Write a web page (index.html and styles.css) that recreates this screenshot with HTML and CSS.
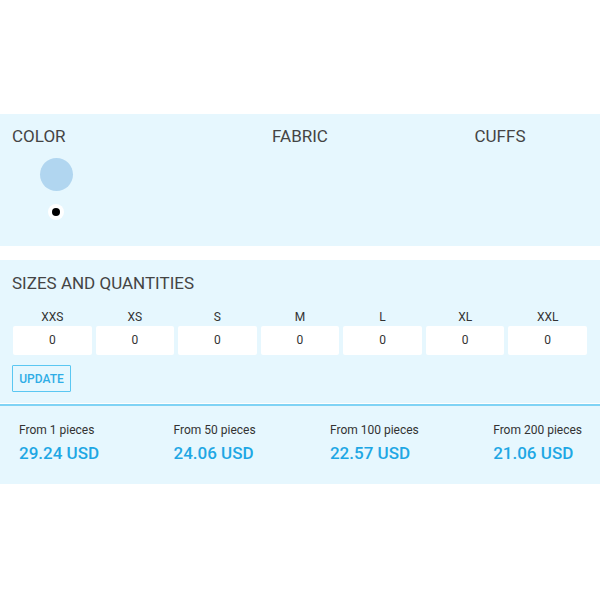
FILE: index.html
```html
<!DOCTYPE html>
<html lang="en">
<head>
  <meta charset="UTF-8">
  <meta name="viewport" content="width=device-width, initial-scale=1.0">
  <title>Product options</title>
  <link rel="stylesheet" href="styles.css">
</head>
<body>
  <div class="page">
    <div class="options">
      <div class="option option-color">
        <div class="option-title">COLOR</div>
        <div class="swatches">
          <div class="swatch"></div>
          <div class="swatch-dot"><span></span></div>
        </div>
      </div>
      <div class="option option-center">
        <div class="option-title">FABRIC</div>
      </div>
      <div class="option option-center">
        <div class="option-title">CUFFS</div>
      </div>
    </div>

    <div class="sizes">
      <div class="section-title">SIZES AND QUANTITIES</div>
      <div class="size-grid">
        <div class="size"><div class="size-label">XXS</div><div class="size-input">0</div></div>
        <div class="size"><div class="size-label">XS</div><div class="size-input">0</div></div>
        <div class="size"><div class="size-label">S</div><div class="size-input">0</div></div>
        <div class="size"><div class="size-label">M</div><div class="size-input">0</div></div>
        <div class="size"><div class="size-label">L</div><div class="size-input">0</div></div>
        <div class="size"><div class="size-label">XL</div><div class="size-input">0</div></div>
        <div class="size"><div class="size-label">XXL</div><div class="size-input">0</div></div>
      </div>
      <button class="update-btn">UPDATE</button>
    </div>

    <div class="prices">
      <div class="price">
        <div class="price-from">From 1 pieces</div>
        <div class="price-value">29.24 USD</div>
      </div>
      <div class="price">
        <div class="price-from">From 50 pieces</div>
        <div class="price-value">24.06 USD</div>
      </div>
      <div class="price">
        <div class="price-from">From 100 pieces</div>
        <div class="price-value">22.57 USD</div>
      </div>
      <div class="price">
        <div class="price-from">From 200 pieces</div>
        <div class="price-value">21.06 USD</div>
      </div>
    </div>
  </div>
</body>
</html>
```

FILE: styles.css
```css
body, html {
  margin: 0;
  padding: 0;
  background-color: #ffffff;
  font-family: 'Roboto', 'Liberation Sans', sans-serif;
  color: #444444;
}

.page {
  padding-top: 114px;
}

/* colour / fabric / cuffs */
.options {
  display: grid;
  grid-template-columns: 1fr 1fr 1fr;
  background-color: #e6f7fe;
  height: 132px;
}

.option {
  padding-top: 12px;
}

.option-color {
  padding-left: 12px;
}

.option-center {
  text-align: center;
}

.option-title {
  font-size: 17px;
  line-height: 20px;
  color: #444444;
}

.swatches {
  display: flex;
  flex-direction: column;
  align-items: center;
  width: 88px;
  gap: 13px;
  margin-top: 12px;
}

.swatch {
  width: 33px;
  height: 33px;
  border-radius: 50%;
  background-color: #b1d6f0;
}

.swatch-dot {
  width: 16px;
  height: 16px;
  border-radius: 50%;
  background-color: #ffffff;
  display: flex;
  align-items: center;
  justify-content: center;
}

.swatch-dot span {
  width: 8px;
  height: 8px;
  border-radius: 50%;
  background-color: #000000;
}

/* sizes */
.sizes {
  margin-top: 14px;
  background-color: #e6f7fe;
  padding: 13px 13px 11px 12px;
}

.section-title {
  font-size: 17px;
  line-height: 20px;
  color: #444444;
}

.size-grid {
  display: grid;
  grid-template-columns: repeat(7, 1fr);
  gap: 4px;
  margin-top: 17px;
  padding-left: 1px;
}

.size {
  display: flex;
  flex-direction: column;
  align-items: center;
}

.size-label {
  font-size: 12px;
  line-height: 14px;
  color: #333333;
  margin-bottom: 2px;
}

.size-input {
  width: 100%;
  height: 29px;
  line-height: 29px;
  background-color: #ffffff;
  border-radius: 2px;
  text-align: center;
  font-size: 12px;
  color: #333333;
}

.update-btn {
  display: block;
  margin-top: 10px;
  width: 59px;
  height: 27px;
  padding: 0;
  background-color: #e6f7fe;
  border: 1px solid #5ac7f2;
  border-radius: 1px;
  color: #2fade6;
  font-family: 'Roboto', 'Liberation Sans', sans-serif;
  font-size: 12px;
  font-weight: 500;
}

/* price tiers */
.prices {
  margin-top: 1px;
  border-top: 2px solid #7fd3f5;
  background-color: #e6f7fe;
  display: flex;
  justify-content: space-between;
  padding: 17px 18px 21px 19px;
}

.price-from {
  font-size: 12px;
  line-height: 15px;
  color: #333333;
}

.price-value {
  margin-top: 5px;
  font-size: 17px;
  font-weight: 500;
  line-height: 20px;
  color: #1ea7e4;
}
```
